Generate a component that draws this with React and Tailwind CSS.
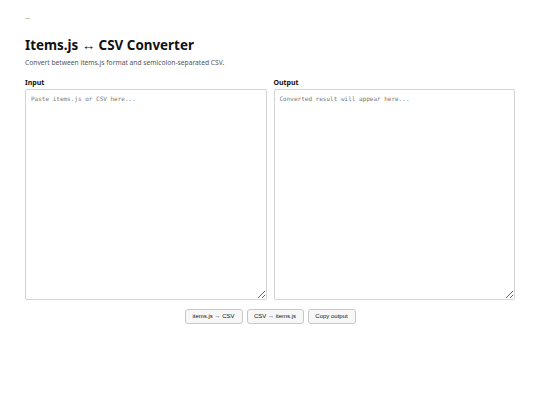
export default function App() {
  return (
    <div className="min-h-[405px] bg-white px-[25px] pt-[12px] font-['Noto_Sans',sans-serif] text-[#111]">
      <div className="text-[6px] leading-[10px] text-[#444]">...</div>

      <h1 className="mt-[14px] text-[13.4px] font-bold leading-[18px]">Items.js ↔ CSV Converter</h1>
      <p className="mt-[4px] text-[6.7px] leading-[10px] text-[#555]">
        Convert between items.js format and semicolon-separated CSV.
      </p>

      <div className="mt-[10px] grid grid-cols-2 gap-[7px]">
        <div>
          <label className="block text-[7px] font-bold leading-[10px]">Input</label>
          <textarea
            placeholder="Paste items.js or CSV here..."
            className="mt-[1px] block h-[211px] w-full rounded-[2px] border border-[#d4d4d4] px-[5px] py-[4px] font-['DejaVu_Sans_Mono',monospace] text-[6px] leading-[9px] placeholder:text-[#777]"
          />
        </div>
        <div>
          <label className="block text-[7px] font-bold leading-[10px]">Output</label>
          <textarea
            readOnly
            placeholder="Converted result will appear here..."
            className="mt-[1px] block h-[211px] w-full rounded-[2px] border border-[#d4d4d4] px-[5px] py-[4px] font-['DejaVu_Sans_Mono',monospace] text-[6px] leading-[9px] placeholder:text-[#777]"
          />
        </div>
      </div>

      <div className="mt-[9px] flex justify-center gap-[4px] font-['Liberation_Sans',sans-serif] text-[6px] text-[#111]">
        <button className="h-[15px] w-[58px] rounded-[3px] border border-[#c8c8c8] bg-[#f7f7f7]">items.js → CSV</button>
        <button className="h-[15px] w-[57px] rounded-[3px] border border-[#c8c8c8] bg-[#f7f7f7]">CSV → items.js</button>
        <button className="h-[15px] w-[48px] rounded-[3px] border border-[#c8c8c8] bg-[#f7f7f7]">Copy output</button>
      </div>
    </div>
  );
}
